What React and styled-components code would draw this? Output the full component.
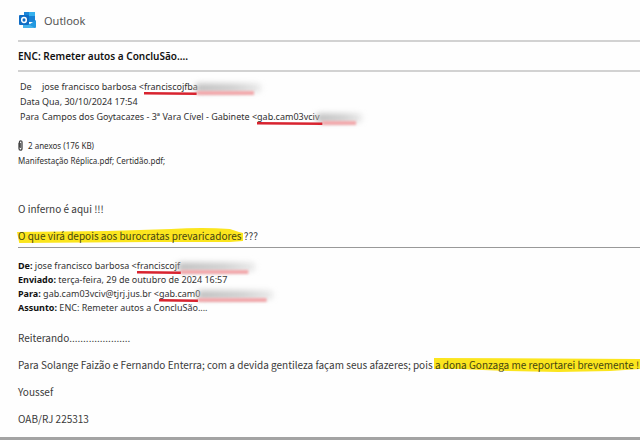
import React from "react"
import styled, { createGlobalStyle } from "styled-components"

const GlobalStyle = createGlobalStyle`
	* {
		box-sizing: border-box;
	}
	body {
		margin: 0;
		background-color: #fefefe;
		color: #303030;
		font-family: "Noto Sans", "Open Sans", sans-serif;
	}
`

const Page = styled.main`
	display: flex;
	flex-direction: column;
	min-height: 100vh;
	overflow: hidden;
	border-bottom: 3px solid #a3a3a3;
`

const Brand = styled.header`
	display: flex;
	align-items: center;
	gap: 7px;
	height: 40px;
	padding-left: 18px;
	font-size: 11px;
	color: #555;
`

const Rule = styled.hr`
	width: calc(100% - 18px);
	height: ${(props) => (props.$dark ? 1 : 2)}px;
	margin: 0 0 0 18px;
	border: none;
	background-color: ${(props) => (props.$dark ? "#999" : "#d2d2d2")};
`

const Subject = styled.h1`
	margin: 0;
	padding-left: 18px;
	font-size: 10px;
	font-weight: 600;
	line-height: 28px;
	color: #111;
`

const Details = styled.dl`
	display: grid;
	grid-template-columns: 22px 1fr;
	margin: 0;
	padding: 7px 0 0 20px;
	font-size: 9px;
	line-height: 15px;
	white-space: nowrap;
`

const Term = styled.dt`
	margin: 0;
`

const Value = styled.dd`
	margin: 0;
`

const Attachments = styled.section`
	padding: 14px 0 0 18px;
	font-size: 8px;
	line-height: 15px;
`

const AttachmentCount = styled.div`
	display: flex;
	align-items: center;
	gap: 5px;
`

const Body = styled.article`
	padding-left: 18px;
	font-size: 10px;
	line-height: 14px;
	color: #3a3a3a;
	white-space: nowrap;
`

const Message = styled(Body)`
	padding-top: 34px;
	padding-bottom: 4px;
`

const Quoted = styled(Body)`
	padding-top: 11px;
`

const Paragraph = styled.p`
	margin: 0 0 13px;
	font-family: "Noto Sans CJK JP", "Noto Sans", sans-serif;

	&:last-child {
		margin-bottom: 0;
	}
`

const QuotedHeader = styled.div`
	margin-bottom: 16px;
	font-size: 9px;
	color: #333;

	b {
		color: #111;
	}
`

const Address = styled.span`
	position: relative;
	display: inline-block;
`

const Smudge = styled.span`
	display: inline-block;
	width: ${(props) => props.$width}px;
	height: 8px;
	margin-left: -3px;
	vertical-align: middle;
	border-radius: 4px;
	background: linear-gradient(90deg, #b4b4b4, #c8c8c8 60%, #e6e6e6);
	filter: blur(3px);
`

const Stroke = styled.svg`
	position: absolute;
	left: 0;
	bottom: -1px;
	width: 100%;
	height: 4px;
	overflow: visible;

	.faded {
		filter: blur(1px);
	}
`

const Marked = styled.mark`
	position: relative;
	z-index: 0;
	display: inline-block;
	background: none;
	color: #444411;
`

const Ink = styled.svg`
	position: absolute;
	z-index: -1;
	left: -1px;
	top: -1px;
	width: calc(100% + 3px);
	height: 16px;
`

function OutlookLogo() {
	return (
		<svg width="19" height="18" viewBox="0 0 19 18" aria-hidden="true">
			<path d="M6 1h11v10H6z" fill="#1a86d9" />
			<path d="M11 1h6v4h-6z" fill="#35b1ee" />
			<path d="M6 5h5v5H6z" fill="#0b5cab" />
			<path d="M11 5h6v5h-6z" fill="#1781d4" />
			<path d="M5 10l7 3 6-4v7q0 1-1 1H6q-1 0-1-1z" fill="#2299e0" />
			<path d="M5 10l12 7H6q-1 0-1-1z" fill="#45b2ea" />
			<rect x="1" y="4" width="10" height="10" rx="1" fill="#0f6cc4" />
			<ellipse
				cx="6"
				cy="9"
				rx="2.3"
				ry="2.5"
				fill="none"
				stroke="#fff"
				strokeWidth="1.5"
			/>
		</svg>
	)
}

function PaperClip() {
	return (
		<svg width="5" height="11" viewBox="0 0 5 11" aria-hidden="true">
			<path
				d="M1 3v5.5q0 1.7 1.5 1.7T4 8.5V2.3Q4 .8 2.7.8T1.4 2.3V7.5"
				fill="none"
				stroke="#444"
				strokeWidth="1.3"
			/>
			<path d="M2.6 3v5" stroke="#555" />
		</svg>
	)
}

function Redacted({ children, width, solid }) {
	return (
		<Address>
			{children}
			<Smudge $width={width} />
			<Stroke viewBox="0 0 100 4" preserveAspectRatio="none" aria-hidden="true">
				<path className="faded" d={`M${solid} 0H94V4H${solid}z`} fill="#f2a9ac" />
				<path d={`M0 1L${solid} 1.5V4L0 3.5z`} fill="#d8232f" />
			</Stroke>
		</Address>
	)
}

function Highlight({ children, shape }) {
	return (
		<Marked>
			<Ink viewBox="0 0 100 16" preserveAspectRatio="none" aria-hidden="true">
				<path d={shape} fill="#fbe51e" />
			</Ink>
			{children}
		</Marked>
	)
}

function App() {
	return (
		<>
			<GlobalStyle />
			<Page>
				<Brand>
					<OutlookLogo />
					Outlook
				</Brand>
				<Rule />
				<Subject>ENC: Remeter autos a ConcluSão....</Subject>
				<Rule />
				<Details>
					<Term>De</Term>
					<Value>
						jose francisco barbosa &lt;
						<Redacted width={66} solid={45}>
							franciscojfba
						</Redacted>
					</Value>
					<Term>Data</Term>
					<Value>Qua, 30/10/2024 17:54</Value>
					<Term>Para</Term>
					<Value>
						Campos dos Goytacazes - 3ª Vara Cível - Gabinete &lt;
						<Redacted width={46} solid={62}>
							gab.cam03vciv
						</Redacted>
					</Value>
				</Details>
				<Attachments>
					<AttachmentCount>
						<PaperClip />2 anexos (176 KB)
					</AttachmentCount>
					<div>Manifestação Réplica.pdf; Certidão.pdf;</div>
				</Attachments>
				<Message>
					<Paragraph>O inferno é aqui !!!</Paragraph>
					<Paragraph>
						<Highlight shape="M0 4L40 3L68 1Q82-1 94 1L98 4L100 5V13L94 14L60 14L1 15z">
							O que virá depois aos burocratas prevaricadores
						</Highlight>{" "}
						???
					</Paragraph>
				</Message>
				<Rule $dark />
				<Quoted>
					<QuotedHeader>
						<div>
							<b>De:</b> jose francisco barbosa &lt;
							<Redacted width={78} solid={37}>
								franciscojf
							</Redacted>
						</div>
						<div>
							<b>Enviado:</b> terça-feira, 29 de outubro de 2024 16:57
						</div>
						<div>
							<b>Para:</b> gab.cam03vciv@tjrj.jus.br &lt;
							<Redacted width={76} solid={34}>
								gab.cam0
							</Redacted>
						</div>
						<div>
							<b>Assunto:</b> ENC: Remeter autos a ConcluSão....
						</div>
					</QuotedHeader>
					<Paragraph>Reiterando......................</Paragraph>
					<Paragraph>
						Para Solange Faizão e Fernando Enterra; com a devida gentileza façam
						seus afazeres; pois{" "}
						<Highlight shape="M0 1L100 2V12L85 14L60 15L35 14L12 12L0 12z">
							a dona Gonzaga me reportarei brevemente !
						</Highlight>
					</Paragraph>
					<Paragraph>Youssef</Paragraph>
					<Paragraph>OAB/RJ 225313</Paragraph>
				</Quoted>
			</Page>
		</>
	)
}

export default App
